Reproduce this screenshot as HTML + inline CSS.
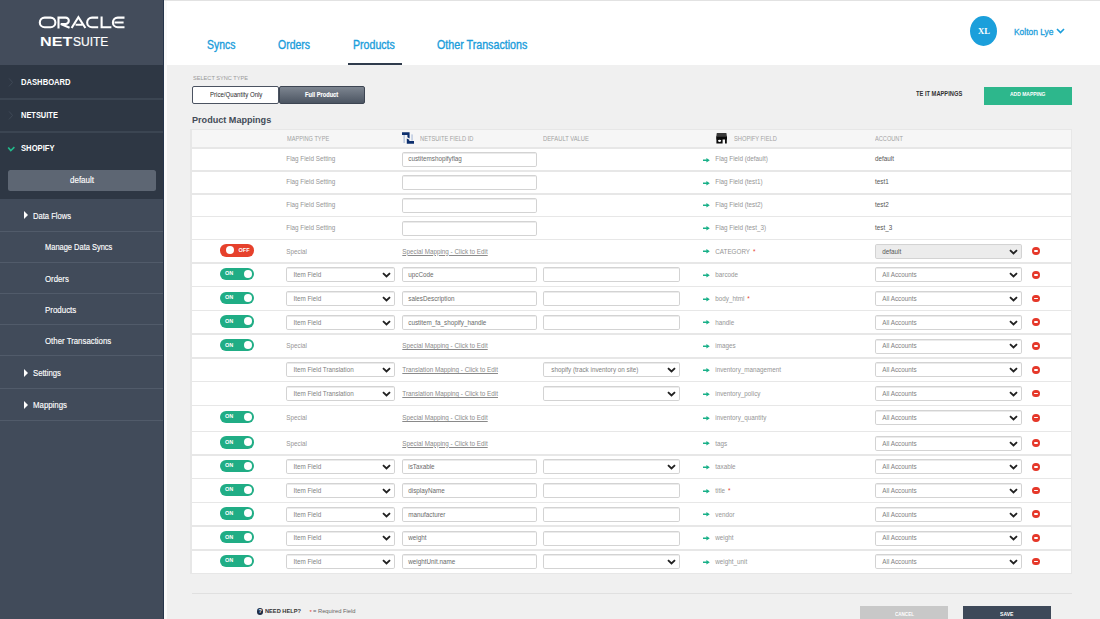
<!DOCTYPE html>
<html><head><meta charset="utf-8">
<style>
*{margin:0;padding:0;box-sizing:border-box}
html,body{width:1100px;height:619px;overflow:hidden;background:#f0f0f0;font-family:"Liberation Sans",sans-serif;position:relative}
.a{position:absolute;white-space:nowrap;transform-origin:0 0}
.r{position:absolute}
#sb{position:absolute;left:0;top:0;width:164px;height:619px;background:#414b5a}
.ssep{position:absolute;left:0;width:163px;height:1.3px;background:#515b6a}
.dsep{position:absolute;left:0;width:163px;height:1.5px;background:#3b4552}
.tri{position:absolute;width:0;height:0;border-top:4.1px solid transparent;border-bottom:4.1px solid transparent;border-left:4.6px solid #fff}
.box{position:absolute;border:1.2px solid #d3d3d3;border-radius:1.8px;background:#fff;box-shadow:inset 0 1px 0.5px #ebebeb}
.sep{position:absolute;left:192px;width:878.5px;height:1.5px;background:#e7e7e7}
.serif{font-family:"Liberation Serif",serif}
.tg{position:absolute;left:220.4px;width:33.8px;height:12.4px;border-radius:6.2px}
.knob{position:absolute;top:2.2px;width:8px;height:8px;border-radius:50%;background:#fff}
.minus{position:absolute;left:1032.2px;width:7.6px;height:7.8px;border-radius:50%;background:#e5382a}
.minus:after{content:"";position:absolute;left:1.8px;top:3.1px;width:4px;height:1.6px;background:#fff;border-radius:1px}
</style></head><body>
<div id="sb">
  <div class="r" style="left:0;top:0;width:163px;height:65px;background:#434c5b"></div>
  <div class="r" style="left:0;top:65px;width:163px;height:134px;background:#2e3744"></div>
  <div class="dsep" style="top:98px"></div>
  <div class="dsep" style="top:131px"></div>
  <svg class="a" style="left:8px;top:77.6px" width="6" height="9" viewBox="0 0 6 9"><path d="M1 0.4L4.6 4.4L1 8.4" fill="none" stroke="#3f4956" stroke-width="1"/></svg>
  <svg class="a" style="left:8px;top:110.6px" width="6" height="9" viewBox="0 0 6 9"><path d="M1 0.4L4.6 4.4L1 8.4" fill="none" stroke="#3f4956" stroke-width="1"/></svg>
  <svg class="a" style="left:6.5px;top:145px" width="9" height="8" viewBox="0 0 9 8"><path d="M1.2 2.4L3.8 5.6L7.4 2.2" fill="none" stroke="#22bb8c" stroke-width="1.6"/></svg>
  <div class="r" style="left:7.8px;top:170px;width:148px;height:21px;border-radius:2.5px;background:#5d6673"></div>
  <div class="ssep" style="top:231px"></div>
  <div class="ssep" style="top:262px"></div>
  <div class="ssep" style="top:293px"></div>
  <div class="ssep" style="top:324px"></div>
  <div class="ssep" style="top:355px"></div>
  <div class="ssep" style="top:388px"></div>
  <div class="ssep" style="top:420px"></div>
  <div class="tri" style="left:24.4px;top:211.4px"></div>
  <div class="tri" style="left:24.4px;top:368.6px"></div>
  <div class="tri" style="left:24.4px;top:401.0px"></div>
  <div class="r" style="left:162.6px;top:0;width:1.6px;height:619px;background:#27354a"></div>
</div>
<div class="r" style="left:164.2px;top:0;width:2.6px;height:619px;background:#fafafa"></div>
<div class="r" style="left:166.8px;top:0;width:933.2px;height:65px;background:#fff"></div>
<div class="r" style="left:164px;top:0;width:936px;height:1px;background:#e2e2e2"></div>
<div class="r" style="left:348.4px;top:62.5px;width:53.2px;height:2.8px;background:#2f3b4c"></div>
<div class="r" style="left:970px;top:16px;width:27px;height:30px;border-radius:50%;background:#1b9fdb"></div>
<svg class="a" style="left:1056px;top:28px" width="9" height="6" viewBox="0 0 9 6"><path d="M1 1L4.5 4.6L8 1" fill="none" stroke="#1a9ddb" stroke-width="1.6"/></svg>
<!-- sync type buttons -->
<div class="r" style="left:191.8px;top:86px;width:87px;height:17.8px;background:#fff;border:1.3px solid #4b5361;border-radius:2px"></div>
<div class="r" style="left:279.2px;top:86px;width:86.3px;height:17.8px;background:linear-gradient(#7d8590,#4c5562);border:1px solid #3d4552;border-radius:2px"></div>
<div class="r" style="left:984px;top:87px;width:87.8px;height:17.8px;background:#2db78c"></div>
<!-- table -->
<div class="r" style="left:190px;top:129px;width:882.3px;height:444.8px;background:#e7e7e7"></div>
<div class="r" style="left:192px;top:130.3px;width:878.5px;height:16.7px;background:#f6f6f6"></div>
<div class="r" style="left:192px;top:148.5px;width:878.5px;height:424.5px;background:#fff"></div>
<svg class="a" style="left:401px;top:131px" width="15" height="14" viewBox="401 131 15 14"><rect x="403.4" y="135" width="1.5" height="8" fill="#b9c7dd"/><rect x="411.2" y="134.4" width="1.7" height="6.2" fill="#c4d0e4"/><path d="M402 132.3H409.6V138.6L407.4 137.2V135H402Z" fill="#0d2f6e"/><path d="M406.8 139V143.8H414V141H409.3V139.8L406.8 138.6Z" fill="#0d2f6e"/></svg>
<svg class="a" style="left:715px;top:132px" width="13" height="13" viewBox="715 132 13 13"><path d="M716.8 133H726.4L726.9 136.5H716.3Z" fill="#3a3a3a"/><path d="M716.2 136.3H727V139.6H726.8V143.5H725V139.6H722.6V143.5H716.4V139.6H716.2Z" fill="#0b0b0b"/><ellipse cx="719.6" cy="140.8" rx="1.6" ry="1.1" fill="#fff"/></svg>
<div class="sep" style="top:147px"></div>
<div class="sep" style="top:170px"></div>
<div class="sep" style="top:193px"></div>
<div class="sep" style="top:215.5px"></div>
<div class="sep" style="top:238.5px"></div>
<div class="sep" style="top:262px"></div>
<div class="sep" style="top:285.5px"></div>
<div class="sep" style="top:309.5px"></div>
<div class="sep" style="top:333px"></div>
<div class="sep" style="top:357px"></div>
<div class="sep" style="top:380.5px"></div>
<div class="sep" style="top:404.5px"></div>
<div class="sep" style="top:430.5px"></div>
<div class="sep" style="top:454px"></div>
<div class="sep" style="top:477.5px"></div>
<div class="sep" style="top:501.5px"></div>
<div class="sep" style="top:525px"></div>
<div class="sep" style="top:549px"></div>
<div class="a " style="left:286.30px;top:156.07px;font-size:6.30px;line-height:6.30px;color:#959595;">Flag Field Setting</div>
<div class="box" style="left:402.3px;top:152.0px;width:134.4px;height:15.0px;background:#fff"></div>
<div class="a " style="left:408.30px;top:156.07px;font-size:6.30px;line-height:6.30px;color:#6a6a6a;">custitemshopifyflag</div>
<svg class="a" style="left:702.5px;top:157.5px" width="7" height="5" viewBox="0 0 7 5"><path d="M0 1.5H3.4V0L6.8 2.3L3.4 4.6V3.1H0Z" fill="#18b088"/></svg>
<div class="a " style="left:715.30px;top:156.07px;font-size:6.30px;line-height:6.30px;color:#959595;">Flag Field (default)</div>
<div class="a " style="left:875.00px;top:156.07px;font-size:6.30px;line-height:6.30px;color:#555;">default</div>
<div class="a " style="left:286.30px;top:179.07px;font-size:6.30px;line-height:6.30px;color:#959595;">Flag Field Setting</div>
<div class="box" style="left:402.3px;top:175.0px;width:134.4px;height:15.0px;background:#fff"></div>
<svg class="a" style="left:702.5px;top:180.5px" width="7" height="5" viewBox="0 0 7 5"><path d="M0 1.5H3.4V0L6.8 2.3L3.4 4.6V3.1H0Z" fill="#18b088"/></svg>
<div class="a " style="left:715.30px;top:179.07px;font-size:6.30px;line-height:6.30px;color:#959595;">Flag Field (test1)</div>
<div class="a " style="left:875.00px;top:179.07px;font-size:6.30px;line-height:6.30px;color:#555;">test1</div>
<div class="a " style="left:286.30px;top:201.82px;font-size:6.30px;line-height:6.30px;color:#959595;">Flag Field Setting</div>
<div class="box" style="left:402.3px;top:197.8px;width:134.4px;height:15.0px;background:#fff"></div>
<svg class="a" style="left:702.5px;top:203.2px" width="7" height="5" viewBox="0 0 7 5"><path d="M0 1.5H3.4V0L6.8 2.3L3.4 4.6V3.1H0Z" fill="#18b088"/></svg>
<div class="a " style="left:715.30px;top:201.82px;font-size:6.30px;line-height:6.30px;color:#959595;">Flag Field (test2)</div>
<div class="a " style="left:875.00px;top:201.82px;font-size:6.30px;line-height:6.30px;color:#555;">test2</div>
<div class="a " style="left:286.30px;top:224.57px;font-size:6.30px;line-height:6.30px;color:#959595;">Flag Field Setting</div>
<div class="box" style="left:402.3px;top:220.5px;width:134.4px;height:15.0px;background:#fff"></div>
<svg class="a" style="left:702.5px;top:226.0px" width="7" height="5" viewBox="0 0 7 5"><path d="M0 1.5H3.4V0L6.8 2.3L3.4 4.6V3.1H0Z" fill="#18b088"/></svg>
<div class="a " style="left:715.30px;top:224.57px;font-size:6.30px;line-height:6.30px;color:#959595;">Flag Field (test_3)</div>
<div class="a " style="left:875.00px;top:224.57px;font-size:6.30px;line-height:6.30px;color:#555;">test_3</div>
<div class="tg" style="top:244.2px;background:#e6412c"><div class="knob" style="left:5.5px"></div></div>
<div class="a " style="left:238.50px;top:247.99px;font-size:5.50px;line-height:5.50px;color:#fff;font-weight:bold;">OFF</div>
<div class="a " style="left:286.30px;top:248.72px;font-size:6.30px;line-height:6.30px;color:#959595;">Special</div>
<div class="a " style="left:402.30px;top:248.72px;font-size:6.30px;line-height:6.30px;color:#8a8a8a;text-decoration:underline">Special Mapping - Click to Edit</div>
<svg class="a" style="left:702.5px;top:249.2px" width="7" height="5" viewBox="0 0 7 5"><path d="M0 1.5H3.4V0L6.8 2.3L3.4 4.6V3.1H0Z" fill="#18b088"/></svg>
<div class="a " style="left:715.30px;top:248.72px;font-size:6.30px;line-height:6.30px;color:#959595;">CATEGORY</div>
<div class="a " style="left:753.07px;top:249.22px;font-size:6.30px;line-height:6.30px;color:#e5412d;">*</div>
<div class="box" style="left:875.3px;top:243.8px;width:146.6px;height:15.0px;background:#ececec"></div>
<div class="a " style="left:882.30px;top:248.72px;font-size:6.30px;line-height:6.30px;color:#555;">default</div>
<svg class="a" style="left:1008.6px;top:248.7px" width="9" height="6" viewBox="0 0 9 6"><path d="M1 1.1 L4.5 4.4 L8 1.1" fill="none" stroke="#222" stroke-width="1.9"/></svg>
<div class="minus" style="top:247.3px"></div>
<div class="tg" style="top:267.8px;background:#20ad85"><div class="knob" style="left:23.5px"></div></div>
<div class="a " style="left:225.00px;top:271.49px;font-size:5.50px;line-height:5.50px;color:#fff;font-weight:bold;">ON</div>
<div class="box" style="left:285.8px;top:267.2px;width:109.3px;height:15.0px;background:#fff"></div>
<div class="a " style="left:293.50px;top:272.22px;font-size:6.30px;line-height:6.30px;color:#7f7f7f;">Item Field</div>
<svg class="a" style="left:381.8px;top:272.1px" width="9" height="6" viewBox="0 0 9 6"><path d="M1 1.1 L4.5 4.4 L8 1.1" fill="none" stroke="#222" stroke-width="1.9"/></svg>
<div class="box" style="left:402.3px;top:267.2px;width:134.4px;height:15.0px;background:#fff"></div>
<div class="a " style="left:408.30px;top:272.22px;font-size:6.30px;line-height:6.30px;color:#6a6a6a;">upcCode</div>
<div class="box" style="left:543.3px;top:267.2px;width:137px;height:15.0px;background:#fff"></div>
<svg class="a" style="left:702.5px;top:272.8px" width="7" height="5" viewBox="0 0 7 5"><path d="M0 1.5H3.4V0L6.8 2.3L3.4 4.6V3.1H0Z" fill="#18b088"/></svg>
<div class="a " style="left:715.30px;top:272.22px;font-size:6.30px;line-height:6.30px;color:#959595;">barcode</div>
<div class="box" style="left:875.3px;top:267.2px;width:146.6px;height:15.0px;background:#fff"></div>
<div class="a " style="left:882.30px;top:272.22px;font-size:6.30px;line-height:6.30px;color:#7f7f7f;">All Accounts</div>
<svg class="a" style="left:1008.6px;top:272.1px" width="9" height="6" viewBox="0 0 9 6"><path d="M1 1.1 L4.5 4.4 L8 1.1" fill="none" stroke="#222" stroke-width="1.9"/></svg>
<div class="minus" style="top:270.9px"></div>
<div class="tg" style="top:291.5px;background:#20ad85"><div class="knob" style="left:23.5px"></div></div>
<div class="a " style="left:225.00px;top:295.24px;font-size:5.50px;line-height:5.50px;color:#fff;font-weight:bold;">ON</div>
<div class="box" style="left:285.8px;top:291.0px;width:109.3px;height:15.0px;background:#fff"></div>
<div class="a " style="left:293.50px;top:295.97px;font-size:6.30px;line-height:6.30px;color:#7f7f7f;">Item Field</div>
<svg class="a" style="left:381.8px;top:295.9px" width="9" height="6" viewBox="0 0 9 6"><path d="M1 1.1 L4.5 4.4 L8 1.1" fill="none" stroke="#222" stroke-width="1.9"/></svg>
<div class="box" style="left:402.3px;top:291.0px;width:134.4px;height:15.0px;background:#fff"></div>
<div class="a " style="left:408.30px;top:295.97px;font-size:6.30px;line-height:6.30px;color:#6a6a6a;">salesDescription</div>
<div class="box" style="left:543.3px;top:291.0px;width:137px;height:15.0px;background:#fff"></div>
<svg class="a" style="left:702.5px;top:296.5px" width="7" height="5" viewBox="0 0 7 5"><path d="M0 1.5H3.4V0L6.8 2.3L3.4 4.6V3.1H0Z" fill="#18b088"/></svg>
<div class="a " style="left:715.30px;top:295.97px;font-size:6.30px;line-height:6.30px;color:#959595;">body_html</div>
<div class="a " style="left:747.37px;top:296.47px;font-size:6.30px;line-height:6.30px;color:#e5412d;">*</div>
<div class="box" style="left:875.3px;top:291.0px;width:146.6px;height:15.0px;background:#fff"></div>
<div class="a " style="left:882.30px;top:295.97px;font-size:6.30px;line-height:6.30px;color:#7f7f7f;">All Accounts</div>
<svg class="a" style="left:1008.6px;top:295.9px" width="9" height="6" viewBox="0 0 9 6"><path d="M1 1.1 L4.5 4.4 L8 1.1" fill="none" stroke="#222" stroke-width="1.9"/></svg>
<div class="minus" style="top:294.6px"></div>
<div class="tg" style="top:315.2px;background:#20ad85"><div class="knob" style="left:23.5px"></div></div>
<div class="a " style="left:225.00px;top:318.99px;font-size:5.50px;line-height:5.50px;color:#fff;font-weight:bold;">ON</div>
<div class="box" style="left:285.8px;top:314.8px;width:109.3px;height:15.0px;background:#fff"></div>
<div class="a " style="left:293.50px;top:319.72px;font-size:6.30px;line-height:6.30px;color:#7f7f7f;">Item Field</div>
<svg class="a" style="left:381.8px;top:319.6px" width="9" height="6" viewBox="0 0 9 6"><path d="M1 1.1 L4.5 4.4 L8 1.1" fill="none" stroke="#222" stroke-width="1.9"/></svg>
<div class="box" style="left:402.3px;top:314.8px;width:134.4px;height:15.0px;background:#fff"></div>
<div class="a " style="left:408.30px;top:319.72px;font-size:6.30px;line-height:6.30px;color:#6a6a6a;">custitem_fa_shopify_handle</div>
<div class="box" style="left:543.3px;top:314.8px;width:137px;height:15.0px;background:#fff"></div>
<svg class="a" style="left:702.5px;top:320.2px" width="7" height="5" viewBox="0 0 7 5"><path d="M0 1.5H3.4V0L6.8 2.3L3.4 4.6V3.1H0Z" fill="#18b088"/></svg>
<div class="a " style="left:715.30px;top:319.72px;font-size:6.30px;line-height:6.30px;color:#959595;">handle</div>
<div class="box" style="left:875.3px;top:314.8px;width:146.6px;height:15.0px;background:#fff"></div>
<div class="a " style="left:882.30px;top:319.72px;font-size:6.30px;line-height:6.30px;color:#7f7f7f;">All Accounts</div>
<svg class="a" style="left:1008.6px;top:319.6px" width="9" height="6" viewBox="0 0 9 6"><path d="M1 1.1 L4.5 4.4 L8 1.1" fill="none" stroke="#222" stroke-width="1.9"/></svg>
<div class="minus" style="top:318.4px"></div>
<div class="tg" style="top:339.0px;background:#20ad85"><div class="knob" style="left:23.5px"></div></div>
<div class="a " style="left:225.00px;top:342.74px;font-size:5.50px;line-height:5.50px;color:#fff;font-weight:bold;">ON</div>
<div class="a " style="left:286.30px;top:343.47px;font-size:6.30px;line-height:6.30px;color:#959595;">Special</div>
<div class="a " style="left:402.30px;top:343.47px;font-size:6.30px;line-height:6.30px;color:#8a8a8a;text-decoration:underline">Special Mapping - Click to Edit</div>
<svg class="a" style="left:702.5px;top:344.0px" width="7" height="5" viewBox="0 0 7 5"><path d="M0 1.5H3.4V0L6.8 2.3L3.4 4.6V3.1H0Z" fill="#18b088"/></svg>
<div class="a " style="left:715.30px;top:343.47px;font-size:6.30px;line-height:6.30px;color:#959595;">images</div>
<div class="box" style="left:875.3px;top:338.5px;width:146.6px;height:15.0px;background:#fff"></div>
<div class="a " style="left:882.30px;top:343.47px;font-size:6.30px;line-height:6.30px;color:#7f7f7f;">All Accounts</div>
<svg class="a" style="left:1008.6px;top:343.4px" width="9" height="6" viewBox="0 0 9 6"><path d="M1 1.1 L4.5 4.4 L8 1.1" fill="none" stroke="#222" stroke-width="1.9"/></svg>
<div class="minus" style="top:342.1px"></div>
<div class="box" style="left:285.8px;top:362.2px;width:109.3px;height:15.0px;background:#fff"></div>
<div class="a " style="left:293.50px;top:367.22px;font-size:6.30px;line-height:6.30px;color:#7f7f7f;">Item Field Translation</div>
<svg class="a" style="left:381.8px;top:367.1px" width="9" height="6" viewBox="0 0 9 6"><path d="M1 1.1 L4.5 4.4 L8 1.1" fill="none" stroke="#222" stroke-width="1.9"/></svg>
<div class="a " style="left:402.30px;top:367.22px;font-size:6.30px;line-height:6.30px;color:#8a8a8a;text-decoration:underline">Translation Mapping - Click to Edit</div>
<div class="box" style="left:543.3px;top:362.2px;width:137px;height:15.0px;background:#fff"></div>
<div class="a " style="left:551.30px;top:367.22px;font-size:6.30px;line-height:6.30px;color:#7f7f7f;">shopify (track inventory on site)</div>
<svg class="a" style="left:667.0px;top:367.1px" width="9" height="6" viewBox="0 0 9 6"><path d="M1 1.1 L4.5 4.4 L8 1.1" fill="none" stroke="#222" stroke-width="1.9"/></svg>
<svg class="a" style="left:702.5px;top:367.8px" width="7" height="5" viewBox="0 0 7 5"><path d="M0 1.5H3.4V0L6.8 2.3L3.4 4.6V3.1H0Z" fill="#18b088"/></svg>
<div class="a " style="left:715.30px;top:367.22px;font-size:6.30px;line-height:6.30px;color:#959595;">inventory_management</div>
<div class="box" style="left:875.3px;top:362.2px;width:146.6px;height:15.0px;background:#fff"></div>
<div class="a " style="left:882.30px;top:367.22px;font-size:6.30px;line-height:6.30px;color:#7f7f7f;">All Accounts</div>
<svg class="a" style="left:1008.6px;top:367.1px" width="9" height="6" viewBox="0 0 9 6"><path d="M1 1.1 L4.5 4.4 L8 1.1" fill="none" stroke="#222" stroke-width="1.9"/></svg>
<div class="minus" style="top:365.9px"></div>
<div class="box" style="left:285.8px;top:386.0px;width:109.3px;height:15.0px;background:#fff"></div>
<div class="a " style="left:293.50px;top:390.97px;font-size:6.30px;line-height:6.30px;color:#7f7f7f;">Item Field Translation</div>
<svg class="a" style="left:381.8px;top:390.9px" width="9" height="6" viewBox="0 0 9 6"><path d="M1 1.1 L4.5 4.4 L8 1.1" fill="none" stroke="#222" stroke-width="1.9"/></svg>
<div class="a " style="left:402.30px;top:390.97px;font-size:6.30px;line-height:6.30px;color:#8a8a8a;text-decoration:underline">Translation Mapping - Click to Edit</div>
<div class="box" style="left:543.3px;top:386.0px;width:137px;height:15.0px;background:#fff"></div>
<svg class="a" style="left:667.0px;top:390.9px" width="9" height="6" viewBox="0 0 9 6"><path d="M1 1.1 L4.5 4.4 L8 1.1" fill="none" stroke="#222" stroke-width="1.9"/></svg>
<svg class="a" style="left:702.5px;top:391.5px" width="7" height="5" viewBox="0 0 7 5"><path d="M0 1.5H3.4V0L6.8 2.3L3.4 4.6V3.1H0Z" fill="#18b088"/></svg>
<div class="a " style="left:715.30px;top:390.97px;font-size:6.30px;line-height:6.30px;color:#959595;">inventory_policy</div>
<div class="box" style="left:875.3px;top:386.0px;width:146.6px;height:15.0px;background:#fff"></div>
<div class="a " style="left:882.30px;top:390.97px;font-size:6.30px;line-height:6.30px;color:#7f7f7f;">All Accounts</div>
<svg class="a" style="left:1008.6px;top:390.9px" width="9" height="6" viewBox="0 0 9 6"><path d="M1 1.1 L4.5 4.4 L8 1.1" fill="none" stroke="#222" stroke-width="1.9"/></svg>
<div class="minus" style="top:389.6px"></div>
<div class="tg" style="top:410.7px;background:#20ad85"><div class="knob" style="left:23.5px"></div></div>
<div class="a " style="left:225.00px;top:414.44px;font-size:5.50px;line-height:5.50px;color:#fff;font-weight:bold;">ON</div>
<div class="a " style="left:286.30px;top:415.17px;font-size:6.30px;line-height:6.30px;color:#959595;">Special</div>
<div class="a " style="left:402.30px;top:415.17px;font-size:6.30px;line-height:6.30px;color:#8a8a8a;text-decoration:underline">Special Mapping - Click to Edit</div>
<svg class="a" style="left:702.5px;top:415.7px" width="7" height="5" viewBox="0 0 7 5"><path d="M0 1.5H3.4V0L6.8 2.3L3.4 4.6V3.1H0Z" fill="#18b088"/></svg>
<div class="a " style="left:715.30px;top:415.17px;font-size:6.30px;line-height:6.30px;color:#959595;">inventory_quantity</div>
<div class="box" style="left:875.3px;top:410.2px;width:146.6px;height:15.0px;background:#fff"></div>
<div class="a " style="left:882.30px;top:415.17px;font-size:6.30px;line-height:6.30px;color:#7f7f7f;">All Accounts</div>
<svg class="a" style="left:1008.6px;top:415.1px" width="9" height="6" viewBox="0 0 9 6"><path d="M1 1.1 L4.5 4.4 L8 1.1" fill="none" stroke="#222" stroke-width="1.9"/></svg>
<div class="minus" style="top:413.8px"></div>
<div class="tg" style="top:436.2px;background:#20ad85"><div class="knob" style="left:23.5px"></div></div>
<div class="a " style="left:225.00px;top:439.99px;font-size:5.50px;line-height:5.50px;color:#fff;font-weight:bold;">ON</div>
<div class="a " style="left:286.30px;top:440.72px;font-size:6.30px;line-height:6.30px;color:#959595;">Special</div>
<div class="a " style="left:402.30px;top:440.72px;font-size:6.30px;line-height:6.30px;color:#8a8a8a;text-decoration:underline">Special Mapping - Click to Edit</div>
<svg class="a" style="left:702.5px;top:441.2px" width="7" height="5" viewBox="0 0 7 5"><path d="M0 1.5H3.4V0L6.8 2.3L3.4 4.6V3.1H0Z" fill="#18b088"/></svg>
<div class="a " style="left:715.30px;top:440.72px;font-size:6.30px;line-height:6.30px;color:#959595;">tags</div>
<div class="box" style="left:875.3px;top:435.8px;width:146.6px;height:15.0px;background:#fff"></div>
<div class="a " style="left:882.30px;top:440.72px;font-size:6.30px;line-height:6.30px;color:#7f7f7f;">All Accounts</div>
<svg class="a" style="left:1008.6px;top:440.6px" width="9" height="6" viewBox="0 0 9 6"><path d="M1 1.1 L4.5 4.4 L8 1.1" fill="none" stroke="#222" stroke-width="1.9"/></svg>
<div class="minus" style="top:439.4px"></div>
<div class="tg" style="top:459.8px;background:#20ad85"><div class="knob" style="left:23.5px"></div></div>
<div class="a " style="left:225.00px;top:463.49px;font-size:5.50px;line-height:5.50px;color:#fff;font-weight:bold;">ON</div>
<div class="box" style="left:285.8px;top:459.2px;width:109.3px;height:15.0px;background:#fff"></div>
<div class="a " style="left:293.50px;top:464.22px;font-size:6.30px;line-height:6.30px;color:#7f7f7f;">Item Field</div>
<svg class="a" style="left:381.8px;top:464.1px" width="9" height="6" viewBox="0 0 9 6"><path d="M1 1.1 L4.5 4.4 L8 1.1" fill="none" stroke="#222" stroke-width="1.9"/></svg>
<div class="box" style="left:402.3px;top:459.2px;width:134.4px;height:15.0px;background:#fff"></div>
<div class="a " style="left:408.30px;top:464.22px;font-size:6.30px;line-height:6.30px;color:#6a6a6a;">isTaxable</div>
<div class="box" style="left:543.3px;top:459.2px;width:137px;height:15.0px;background:#fff"></div>
<svg class="a" style="left:667.0px;top:464.1px" width="9" height="6" viewBox="0 0 9 6"><path d="M1 1.1 L4.5 4.4 L8 1.1" fill="none" stroke="#222" stroke-width="1.9"/></svg>
<svg class="a" style="left:702.5px;top:464.8px" width="7" height="5" viewBox="0 0 7 5"><path d="M0 1.5H3.4V0L6.8 2.3L3.4 4.6V3.1H0Z" fill="#18b088"/></svg>
<div class="a " style="left:715.30px;top:464.22px;font-size:6.30px;line-height:6.30px;color:#959595;">taxable</div>
<div class="box" style="left:875.3px;top:459.2px;width:146.6px;height:15.0px;background:#fff"></div>
<div class="a " style="left:882.30px;top:464.22px;font-size:6.30px;line-height:6.30px;color:#7f7f7f;">All Accounts</div>
<svg class="a" style="left:1008.6px;top:464.1px" width="9" height="6" viewBox="0 0 9 6"><path d="M1 1.1 L4.5 4.4 L8 1.1" fill="none" stroke="#222" stroke-width="1.9"/></svg>
<div class="minus" style="top:462.9px"></div>
<div class="tg" style="top:483.5px;background:#20ad85"><div class="knob" style="left:23.5px"></div></div>
<div class="a " style="left:225.00px;top:487.24px;font-size:5.50px;line-height:5.50px;color:#fff;font-weight:bold;">ON</div>
<div class="box" style="left:285.8px;top:483.0px;width:109.3px;height:15.0px;background:#fff"></div>
<div class="a " style="left:293.50px;top:487.97px;font-size:6.30px;line-height:6.30px;color:#7f7f7f;">Item Field</div>
<svg class="a" style="left:381.8px;top:487.9px" width="9" height="6" viewBox="0 0 9 6"><path d="M1 1.1 L4.5 4.4 L8 1.1" fill="none" stroke="#222" stroke-width="1.9"/></svg>
<div class="box" style="left:402.3px;top:483.0px;width:134.4px;height:15.0px;background:#fff"></div>
<div class="a " style="left:408.30px;top:487.97px;font-size:6.30px;line-height:6.30px;color:#6a6a6a;">displayName</div>
<div class="box" style="left:543.3px;top:483.0px;width:137px;height:15.0px;background:#fff"></div>
<svg class="a" style="left:702.5px;top:488.5px" width="7" height="5" viewBox="0 0 7 5"><path d="M0 1.5H3.4V0L6.8 2.3L3.4 4.6V3.1H0Z" fill="#18b088"/></svg>
<div class="a " style="left:715.30px;top:487.97px;font-size:6.30px;line-height:6.30px;color:#959595;">title</div>
<div class="a " style="left:728.10px;top:488.47px;font-size:6.30px;line-height:6.30px;color:#e5412d;">*</div>
<div class="box" style="left:875.3px;top:483.0px;width:146.6px;height:15.0px;background:#fff"></div>
<div class="a " style="left:882.30px;top:487.97px;font-size:6.30px;line-height:6.30px;color:#7f7f7f;">All Accounts</div>
<svg class="a" style="left:1008.6px;top:487.9px" width="9" height="6" viewBox="0 0 9 6"><path d="M1 1.1 L4.5 4.4 L8 1.1" fill="none" stroke="#222" stroke-width="1.9"/></svg>
<div class="minus" style="top:486.6px"></div>
<div class="tg" style="top:507.2px;background:#20ad85"><div class="knob" style="left:23.5px"></div></div>
<div class="a " style="left:225.00px;top:510.99px;font-size:5.50px;line-height:5.50px;color:#fff;font-weight:bold;">ON</div>
<div class="box" style="left:285.8px;top:506.8px;width:109.3px;height:15.0px;background:#fff"></div>
<div class="a " style="left:293.50px;top:511.72px;font-size:6.30px;line-height:6.30px;color:#7f7f7f;">Item Field</div>
<svg class="a" style="left:381.8px;top:511.6px" width="9" height="6" viewBox="0 0 9 6"><path d="M1 1.1 L4.5 4.4 L8 1.1" fill="none" stroke="#222" stroke-width="1.9"/></svg>
<div class="box" style="left:402.3px;top:506.8px;width:134.4px;height:15.0px;background:#fff"></div>
<div class="a " style="left:408.30px;top:511.72px;font-size:6.30px;line-height:6.30px;color:#6a6a6a;">manufacturer</div>
<div class="box" style="left:543.3px;top:506.8px;width:137px;height:15.0px;background:#fff"></div>
<svg class="a" style="left:702.5px;top:512.2px" width="7" height="5" viewBox="0 0 7 5"><path d="M0 1.5H3.4V0L6.8 2.3L3.4 4.6V3.1H0Z" fill="#18b088"/></svg>
<div class="a " style="left:715.30px;top:511.72px;font-size:6.30px;line-height:6.30px;color:#959595;">vendor</div>
<div class="box" style="left:875.3px;top:506.8px;width:146.6px;height:15.0px;background:#fff"></div>
<div class="a " style="left:882.30px;top:511.72px;font-size:6.30px;line-height:6.30px;color:#7f7f7f;">All Accounts</div>
<svg class="a" style="left:1008.6px;top:511.6px" width="9" height="6" viewBox="0 0 9 6"><path d="M1 1.1 L4.5 4.4 L8 1.1" fill="none" stroke="#222" stroke-width="1.9"/></svg>
<div class="minus" style="top:510.4px"></div>
<div class="tg" style="top:531.0px;background:#20ad85"><div class="knob" style="left:23.5px"></div></div>
<div class="a " style="left:225.00px;top:534.74px;font-size:5.50px;line-height:5.50px;color:#fff;font-weight:bold;">ON</div>
<div class="box" style="left:285.8px;top:530.5px;width:109.3px;height:15.0px;background:#fff"></div>
<div class="a " style="left:293.50px;top:535.47px;font-size:6.30px;line-height:6.30px;color:#7f7f7f;">Item Field</div>
<svg class="a" style="left:381.8px;top:535.4px" width="9" height="6" viewBox="0 0 9 6"><path d="M1 1.1 L4.5 4.4 L8 1.1" fill="none" stroke="#222" stroke-width="1.9"/></svg>
<div class="box" style="left:402.3px;top:530.5px;width:134.4px;height:15.0px;background:#fff"></div>
<div class="a " style="left:408.30px;top:535.47px;font-size:6.30px;line-height:6.30px;color:#6a6a6a;">weight</div>
<div class="box" style="left:543.3px;top:530.5px;width:137px;height:15.0px;background:#fff"></div>
<svg class="a" style="left:702.5px;top:536.0px" width="7" height="5" viewBox="0 0 7 5"><path d="M0 1.5H3.4V0L6.8 2.3L3.4 4.6V3.1H0Z" fill="#18b088"/></svg>
<div class="a " style="left:715.30px;top:535.47px;font-size:6.30px;line-height:6.30px;color:#959595;">weight</div>
<div class="box" style="left:875.3px;top:530.5px;width:146.6px;height:15.0px;background:#fff"></div>
<div class="a " style="left:882.30px;top:535.47px;font-size:6.30px;line-height:6.30px;color:#7f7f7f;">All Accounts</div>
<svg class="a" style="left:1008.6px;top:535.4px" width="9" height="6" viewBox="0 0 9 6"><path d="M1 1.1 L4.5 4.4 L8 1.1" fill="none" stroke="#222" stroke-width="1.9"/></svg>
<div class="minus" style="top:534.1px"></div>
<div class="tg" style="top:554.5px;background:#20ad85"><div class="knob" style="left:23.5px"></div></div>
<div class="a " style="left:225.00px;top:558.24px;font-size:5.50px;line-height:5.50px;color:#fff;font-weight:bold;">ON</div>
<div class="box" style="left:285.8px;top:554.0px;width:109.3px;height:15.0px;background:#fff"></div>
<div class="a " style="left:293.50px;top:558.97px;font-size:6.30px;line-height:6.30px;color:#7f7f7f;">Item Field</div>
<svg class="a" style="left:381.8px;top:558.9px" width="9" height="6" viewBox="0 0 9 6"><path d="M1 1.1 L4.5 4.4 L8 1.1" fill="none" stroke="#222" stroke-width="1.9"/></svg>
<div class="box" style="left:402.3px;top:554.0px;width:134.4px;height:15.0px;background:#fff"></div>
<div class="a " style="left:408.30px;top:558.97px;font-size:6.30px;line-height:6.30px;color:#6a6a6a;">weightUnit.name</div>
<div class="box" style="left:543.3px;top:554.0px;width:137px;height:15.0px;background:#fff"></div>
<svg class="a" style="left:667.0px;top:558.9px" width="9" height="6" viewBox="0 0 9 6"><path d="M1 1.1 L4.5 4.4 L8 1.1" fill="none" stroke="#222" stroke-width="1.9"/></svg>
<svg class="a" style="left:702.5px;top:559.5px" width="7" height="5" viewBox="0 0 7 5"><path d="M0 1.5H3.4V0L6.8 2.3L3.4 4.6V3.1H0Z" fill="#18b088"/></svg>
<div class="a " style="left:715.30px;top:558.97px;font-size:6.30px;line-height:6.30px;color:#959595;">weight_unit</div>
<div class="box" style="left:875.3px;top:554.0px;width:146.6px;height:15.0px;background:#fff"></div>
<div class="a " style="left:882.30px;top:558.97px;font-size:6.30px;line-height:6.30px;color:#7f7f7f;">All Accounts</div>
<svg class="a" style="left:1008.6px;top:558.9px" width="9" height="6" viewBox="0 0 9 6"><path d="M1 1.1 L4.5 4.4 L8 1.1" fill="none" stroke="#222" stroke-width="1.9"/></svg>
<div class="minus" style="top:557.6px"></div>
<div class="r" style="left:191.5px;top:593px;width:880.5px;height:1px;background:#e0e0e0"></div>
<div class="r" style="left:256.8px;top:608px;width:6.6px;height:7px;border-radius:50%;background:#1e2d46;color:#fff;font-size:5.5px;line-height:7px;text-align:center;font-weight:bold">?</div>
<div class="r" style="left:860.2px;top:606.2px;width:87.8px;height:13px;background:#c8c8c8"></div>
<div class="r" style="left:962.5px;top:606.2px;width:88px;height:13px;background:#3e4959"></div>
<svg class="a" style="left:36px;top:14px" width="92" height="17" viewBox="0 0 92 17">
<g fill="none" stroke="#fff" stroke-width="2.1">
<rect x="3.8" y="3.6" width="15.6" height="9.7" rx="4.85"/>
<path d="M22.5 14.4V3.6H29.6A3.2 3.2 0 0 1 29.6 10H24.8L33.6 13.8"/>
<path d="M35.6 14L42.4 3.2L49.4 14M39.6 10.8H46.4"/>
<path d="M62.2 3.6H56A4.85 4.85 0 0 0 56 13.3H62.2"/>
<path d="M65.6 2.5V13.3H75.4"/>
<path d="M88.5 3.6H81.75A4.85 4.85 0 0 0 81.75 13.3H88.5M78.5 8.45H87.6"/>
</g></svg>
<div class="a lato" style="left:40.00px;top:34.88px;font-size:13.37px;line-height:13.37px;color:#fff;font-weight:bold;transform:scaleX(1.208);">NET</div>
<div class="a lato" style="left:72.80px;top:34.88px;font-size:13.37px;line-height:13.37px;color:#fff;transform:scaleX(0.899);-webkit-text-stroke:0.2px #fff">SUITE</div>
<div class="a " style="left:20.60px;top:77.77px;font-size:9.01px;line-height:9.01px;color:#fff;font-weight:bold;transform:scaleX(0.848);">DASHBOARD</div>
<div class="a " style="left:20.60px;top:111.27px;font-size:9.01px;line-height:9.01px;color:#fff;font-weight:bold;transform:scaleX(0.828);">NETSUITE</div>
<div class="a " style="left:20.60px;top:144.33px;font-size:9.30px;line-height:9.30px;color:#fff;font-weight:bold;transform:scaleX(0.823);">SHOPIFY</div>
<div class="a " style="left:69.90px;top:175.03px;font-size:9.88px;line-height:9.88px;color:#fff;transform:scaleX(0.809);-webkit-text-stroke:0.15px #fff">default</div>
<div class="a " style="left:32.50px;top:210.76px;font-size:9.74px;line-height:9.74px;color:#fff;transform:scaleX(0.782);-webkit-text-stroke:0.15px #fff">Data Flows</div>
<div class="a " style="left:45.20px;top:243.45px;font-size:9.16px;line-height:9.16px;color:#fff;transform:scaleX(0.816);-webkit-text-stroke:0.15px #fff">Manage Data Syncs</div>
<div class="a " style="left:45.20px;top:273.83px;font-size:9.88px;line-height:9.88px;color:#fff;transform:scaleX(0.788);-webkit-text-stroke:0.15px #fff">Orders</div>
<div class="a " style="left:45.20px;top:304.83px;font-size:9.88px;line-height:9.88px;color:#fff;transform:scaleX(0.802);-webkit-text-stroke:0.15px #fff">Products</div>
<div class="a " style="left:45.20px;top:336.13px;font-size:9.88px;line-height:9.88px;color:#fff;transform:scaleX(0.794);-webkit-text-stroke:0.15px #fff">Other Transactions</div>
<div class="a " style="left:32.50px;top:368.13px;font-size:9.88px;line-height:9.88px;color:#fff;transform:scaleX(0.784);-webkit-text-stroke:0.15px #fff">Settings</div>
<div class="a " style="left:32.50px;top:400.33px;font-size:9.88px;line-height:9.88px;color:#fff;transform:scaleX(0.793);-webkit-text-stroke:0.15px #fff">Mappings</div>
<div class="a " style="left:206.80px;top:39.91px;font-size:11.92px;line-height:11.92px;color:#1a9ddb;transform:scaleX(0.875);-webkit-text-stroke:0.35px #1a9ddb">Syncs</div>
<div class="a " style="left:278.20px;top:39.91px;font-size:11.92px;line-height:11.92px;color:#1a9ddb;transform:scaleX(0.879);-webkit-text-stroke:0.35px #1a9ddb">Orders</div>
<div class="a " style="left:352.90px;top:39.91px;font-size:11.92px;line-height:11.92px;color:#1a9ddb;transform:scaleX(0.891);-webkit-text-stroke:0.35px #1a9ddb">Products</div>
<div class="a " style="left:437.30px;top:39.91px;font-size:11.92px;line-height:11.92px;color:#1a9ddb;transform:scaleX(0.898);-webkit-text-stroke:0.35px #1a9ddb">Other Transactions</div>
<div class="a serif" style="left:978.00px;top:27.71px;font-size:8.14px;line-height:8.14px;color:#fff;font-weight:bold;transform:scaleX(1.058);">XL</div>
<div class="a " style="left:1014.20px;top:26.88px;font-size:9.59px;line-height:9.59px;color:#1a9ddb;transform:scaleX(0.880);-webkit-text-stroke:0.3px #1a9ddb">Kolton Lye</div>
<div class="a " style="left:193.20px;top:76.32px;font-size:5.52px;line-height:5.52px;color:#999;transform:scaleX(1.016);">SELECT SYNC TYPE</div>
<div class="a " style="left:209.50px;top:90.93px;font-size:7.99px;line-height:7.99px;color:#2a2a2a;transform:scaleX(0.762);">Price/Quantity Only</div>
<div class="a " style="left:305.30px;top:90.93px;font-size:7.99px;line-height:7.99px;color:#fff;font-weight:bold;transform:scaleX(0.712);-webkit-text-stroke:0.15px #fff">Full Product</div>
<div class="a " style="left:192.30px;top:115.48px;font-size:9.59px;line-height:9.59px;color:#434b57;font-weight:bold;transform:scaleX(0.948);">Product Mappings</div>
<div class="a " style="left:916.00px;top:90.87px;font-size:7.12px;line-height:7.12px;color:#333;font-weight:bold;transform:scaleX(0.807);">TE IT MAPPINGS</div>
<div class="a " style="left:1010.00px;top:92.47px;font-size:5.23px;line-height:5.23px;color:#fff;font-weight:bold;transform:scaleX(0.954);">ADD MAPPING</div>
<div class="a " style="left:286.50px;top:135.29px;font-size:6.98px;line-height:6.98px;color:#a3a3a3;transform:scaleX(0.808);">MAPPING TYPE</div>
<div class="a " style="left:419.80px;top:135.29px;font-size:6.98px;line-height:6.98px;color:#a3a3a3;transform:scaleX(0.820);">NETSUITE FIELD ID</div>
<div class="a " style="left:542.80px;top:135.29px;font-size:6.98px;line-height:6.98px;color:#a3a3a3;transform:scaleX(0.834);">DEFAULT VALUE</div>
<div class="a " style="left:733.50px;top:135.29px;font-size:6.98px;line-height:6.98px;color:#a3a3a3;transform:scaleX(0.820);">SHOPIFY FIELD</div>
<div class="a " style="left:875.10px;top:135.29px;font-size:6.98px;line-height:6.98px;color:#a3a3a3;transform:scaleX(0.809);">ACCOUNT</div>
<div class="a " style="left:264.60px;top:608.01px;font-size:6.25px;line-height:6.25px;color:#333;font-weight:bold;transform:scaleX(0.907);">NEED HELP?</div>
<div class="a " style="left:309.50px;top:608.92px;font-size:6.00px;line-height:6.00px;color:#e5412d;">*</div>
<div class="a " style="left:313.20px;top:608.01px;font-size:6.25px;line-height:6.25px;color:#666;transform:scaleX(0.925);">= Required Field</div>
<div class="a " style="left:895.00px;top:611.57px;font-size:5.23px;line-height:5.23px;color:#fff;font-weight:bold;transform:scaleX(0.871);">CANCEL</div>
<div class="a " style="left:999.50px;top:611.57px;font-size:5.23px;line-height:5.23px;color:#fff;font-weight:bold;transform:scaleX(0.974);">SAVE</div>
</body></html>
